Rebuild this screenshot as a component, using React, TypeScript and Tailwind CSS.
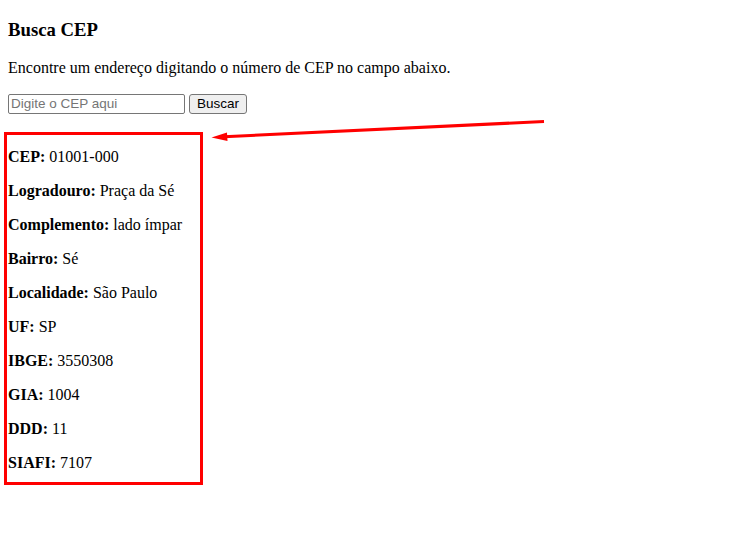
import React from "react";

const rows: [string, string][] = [
  ["CEP:", "01001-000"],
  ["Logradouro:", "Praça da Sé"],
  ["Complemento:", "lado ímpar"],
  ["Bairro:", "Sé"],
  ["Localidade:", "São Paulo"],
  ["UF:", "SP"],
  ["IBGE:", "3550308"],
  ["GIA:", "1004"],
  ["DDD:", "11"],
  ["SIAFI:", "7107"],
];

export default function App() {
  return (
    <div className="relative w-[732px] h-[545px] bg-white text-black overflow-hidden font-['Liberation_Serif',serif]">
      <div className="pl-[8px]">
        <h3 className="pt-[19px] text-[18.72px] leading-[22px] font-bold">Busca CEP</h3>
        <p className="mt-[18px] text-[16px] leading-[18px]">
          Encontre um endereço digitando o número de CEP no campo abaixo.
        </p>
        <div className="mt-[17px] flex items-center gap-[4px] h-[20px]">
          <input
            type="text"
            placeholder="Digite o CEP aqui"
            className="w-[177px] h-[20px] border border-[#767676] rounded-[2px] px-[2px] text-[13.5px] font-['Liberation_Sans',sans-serif] placeholder:text-[#757575] outline-none"
          />
          <button className="h-[20px] px-[7px] border border-[#767676] rounded-[3px] bg-[#efefef] text-[13.5px] leading-none font-['Liberation_Sans',sans-serif]">
            Buscar
          </button>
        </div>
        <div className="mt-[18px] -ml-[4px] w-[199px] border-[3px] border-[#ff0000] pt-[13px] pb-[10px] pl-[1px] flex flex-col gap-[16px]">
          {rows.map(([k, v]) => (
            <p key={k} className="text-[16px] leading-[18px] whitespace-nowrap">
              <b>{k}</b> {v}
            </p>
          ))}
        </div>
      </div>
      <svg className="absolute left-0 top-0 pointer-events-none" width="732" height="545">
        <line x1="544" y1="121.5" x2="224" y2="136.8" stroke="#ff0000" strokeWidth="3" />
        <polygon points="211.5,137.5 227,132.5 227.5,141" fill="#ff0000" />
      </svg>
    </div>
  );
}
